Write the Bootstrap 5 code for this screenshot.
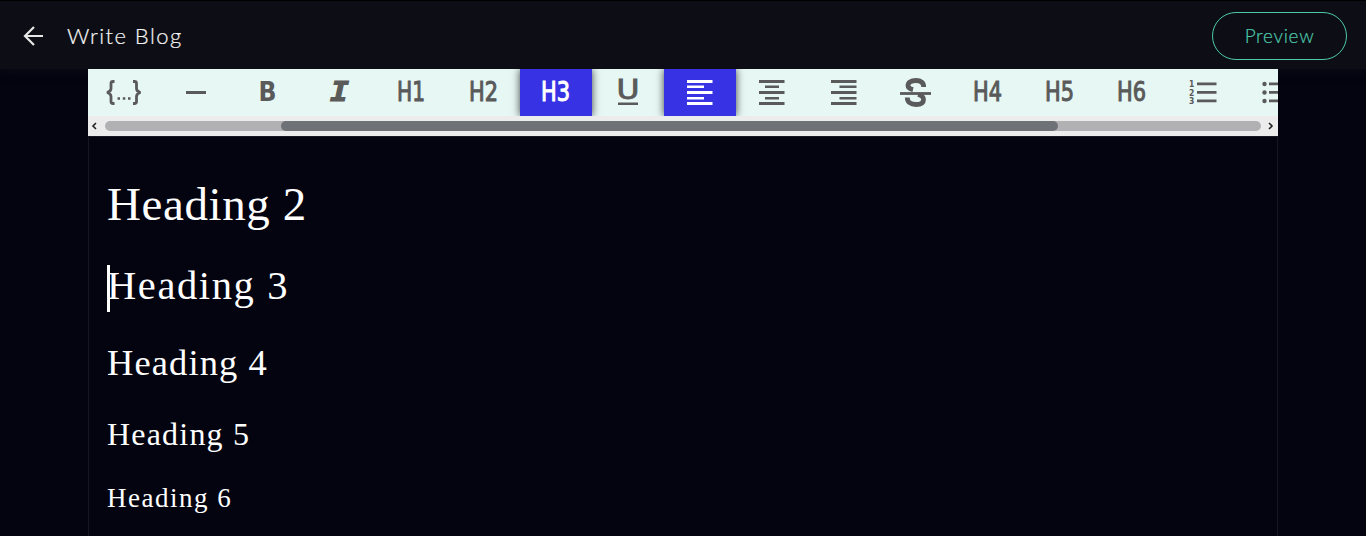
<!DOCTYPE html>
<html lang="en">
<head>
<meta charset="utf-8">
<title>Write Blog</title>
<meta name="viewport" content="width=device-width, initial-scale=1">
<link href="https://cdn.jsdelivr.net/npm/bootstrap@5.3.0/dist/css/bootstrap.min.css" rel="stylesheet">
<style>
body{background:#040411;color:#fff;font-family:Lato,"Open Sans",sans-serif;height:100vh}
.topbar{height:69px;background:#0d0d15;border-top:1px solid #000;padding:2px 19px 0 20px;box-shadow:0 1px 10px #0d0d15;flex:none}
.page-title{font-size:22px;font-weight:300;letter-spacing:1.45px;line-height:30px;color:#f4f4f4;margin-left:21px;-webkit-text-stroke:.2px}
.btn-preview{width:135px;height:48px;border:1px solid #4cc9ac;color:#4cc9ac;font-size:19px;font-weight:300;letter-spacing:.7px;-webkit-text-stroke:.2px}
.editor{width:1190px}
.tools{height:47px;background:#e6f7f4;color:#5a5a5a}
.tool{width:72px;height:47px;flex:none;padding:0;border:0;background:none;color:inherit;display:block}
.tool svg{display:block}
.tool.on{background:#3733e4;color:#fff;box-shadow:0 0 8px #000b}
.tool text{font-family:"DejaVu Sans Condensed","DejaVu Sans",sans-serif;fill:currentColor}
.tool .level{font-size:27px;stroke:currentColor;stroke-width:1}
.scroller{height:20px;background:#ececec;padding:0 3px}
.track{height:10px;margin:0 5px;background:#b1b1b3;border-radius:5px}
.thumb{height:10px;width:777px;margin-left:176px;background:#6e7176;border-radius:5px}
.sheet{border:1px solid #171720;border-bottom:0;padding:43px 18px 0;font-family:"Liberation Serif",serif}
.sheet > *{font-weight:400;line-height:48px;margin:0;white-space:nowrap}
.sheet h2{font-size:47px;letter-spacing:.6px;margin-bottom:34px}
.sheet h3{font-size:40.5px;letter-spacing:1.6px;margin-bottom:29px}
.sheet h4{font-size:36.5px;letter-spacing:1.1px;margin-bottom:23px}
.sheet h5{font-size:32px;letter-spacing:1.2px;margin-bottom:16px}
.sheet h6{font-size:27px;letter-spacing:1.5px}
.caret{left:0;top:3px;width:3px;height:47px;background:#fff}
</style>
</head>
<body class="d-flex flex-column overflow-hidden">
<header class="topbar d-flex align-items-center">
  <svg width="26" height="26" viewBox="0 0 26 26" fill="none" stroke="#e6e6e6" stroke-width="2.200"><path d="M23 13H5M14 4L5 13l9 9"/></svg>
  <div class="page-title">Write Blog</div>
  <button class="btn btn-preview rounded-pill ms-auto p-0">Preview</button>
</header>
<main class="editor mx-auto d-flex flex-column flex-grow-1 position-relative">
  <div class="tools d-flex overflow-hidden">
    <button class="tool"><svg width="72" height="47" fill="none" stroke="currentColor" stroke-width="2.800"><path d="M26.500 12.500h-1.500q-2 0-2 2v5q0 3-4 4q4 1 4 4v5q0 2 2 2h1.500M45 12.500h1.500q2 0 2 2v5q0 3 4 4q-4 1-4 4v5q0 2-2 2h-1.500"/><path d="M29.500 29.500h2.500M34.800 29.500h2.500M40 29.500h2.500" stroke-width="2.500"/></svg></button>
    <button class="tool"><svg width="72" height="47"><path d="M26 22h20v3H26z" fill="currentColor"/></svg></button>
    <button class="tool"><svg width="72" height="47"><text x="26.500" y="32" font-size="27" font-weight="700" textLength="18" lengthAdjust="spacingAndGlyphs">B</text></svg></button>
    <button class="tool"><svg width="72" height="47"><text x="26" y="32" font-size="27" font-weight="700" font-style="italic" stroke="currentColor" textLength="19" lengthAdjust="spacingAndGlyphs" style="font-family:'DejaVu Sans Mono',monospace">I</text></svg></button>
    <button class="tool"><svg width="72" height="47"><text class="level" x="21" y="32" textLength="28" lengthAdjust="spacingAndGlyphs">H1</text></svg></button>
    <button class="tool"><svg width="72" height="47"><text class="level" x="21" y="32" textLength="29" lengthAdjust="spacingAndGlyphs">H2</text></svg></button>
    <button class="tool on"><svg width="72" height="47"><text class="level" x="21" y="32" textLength="29" lengthAdjust="spacingAndGlyphs">H3</text></svg></button>
    <button class="tool"><svg width="72" height="47"><text x="24.500" y="30" font-size="26" stroke="currentColor" stroke-width=".8" textLength="23" lengthAdjust="spacingAndGlyphs">U</text><path d="M26 33.500h20v2.500H26z" fill="currentColor"/></svg></button>
    <button class="tool on"><svg width="72" height="47" fill="currentColor"><path d="M23 11h25.500v3H23zM23 16.500h17v2.500H23zM23 22h25.500v3H23zM23 28h17v2.500H23zM23 33h25.500v3H23z"/></svg></button>
    <button class="tool"><svg width="72" height="47" fill="currentColor"><path d="M23 11h25.500v3H23zM29 16.500h14v2.500H29zM23 22h25.500v3H23zM29 28h14v2.500H29zM23 33h25.500v3H23z"/></svg></button>
    <button class="tool"><svg width="72" height="47" fill="currentColor"><path d="M23 11h25.500v3H23zM31.500 16.500h17v2.500h-17zM23 22h25.500v3H23zM31.500 28h17v2.500h-17zM23 33h25.500v3H23z"/></svg></button>
    <button class="tool"><svg width="72" height="47" fill="none" stroke="currentColor"><path d="M43.700 18C43.700 13.500 41 11.500 36 11.500C30.500 11.500 28 13.500 28 16.500C28 19 30 20 33 20.700M38 25.500C42 26.500 43.500 28 43.500 30.500C43.500 33.500 41 35.500 36 35.500C30.500 35.500 27.300 33 27.300 28.500" stroke-width="4.800"/><path d="M20 24.500h31" stroke-width="2.800"/></svg></button>
    <button class="tool"><svg width="72" height="47"><text class="level" x="21" y="32" textLength="29" lengthAdjust="spacingAndGlyphs">H4</text></svg></button>
    <button class="tool"><svg width="72" height="47"><text class="level" x="21" y="32" textLength="29" lengthAdjust="spacingAndGlyphs">H5</text></svg></button>
    <button class="tool"><svg width="72" height="47"><text class="level" x="21" y="32" textLength="29" lengthAdjust="spacingAndGlyphs">H6</text></svg></button>
    <button class="tool"><svg width="72" height="47" fill="currentColor"><path d="M29 13.500h19.500v2.800H29zM29 22h19.500v2.800H29zM29 30.500h19.500v2.800H29z"/><g font-size="8.500" font-weight="700"><text x="21" y="18">1</text><text x="21" y="26.500">2</text><text x="21" y="34.500">3</text></g></svg></button>
    <button class="tool"><svg width="72" height="47" fill="currentColor"><circle cx="24.500" cy="15" r="2.200"/><circle cx="24.500" cy="23.500" r="2.200"/><circle cx="24.500" cy="32" r="2.200"/><path d="M29 13.500h19.500v2.800H29zM29 22h19.500v2.800H29zM29 30.500h19.500v2.800H29z"/></svg></button>
  </div>
  <div class="scroller d-flex align-items-center position-relative">
    <svg width="9" height="10" fill="none" stroke="#222" stroke-width="1.600"><path d="M5 2L2 5l3 3"/></svg>
    <div class="track flex-grow-1"><div class="thumb"></div></div>
    <svg width="9" height="10" fill="none" stroke="#222" stroke-width="1.600"><path d="M3 2l3 3-3 3"/></svg>
  </div>
  <article class="sheet flex-grow-1">
    <h2>Heading 2</h2>
    <h3 class="position-relative">Heading 3<span class="caret position-absolute"></span></h3>
    <h4>Heading 4</h4>
    <h5>Heading 5</h5>
    <h6>Heading 6</h6>
  </article>
</main>
<script src="https://cdn.jsdelivr.net/npm/bootstrap@5.3.0/dist/js/bootstrap.bundle.min.js"></script>
</body>
</html>
